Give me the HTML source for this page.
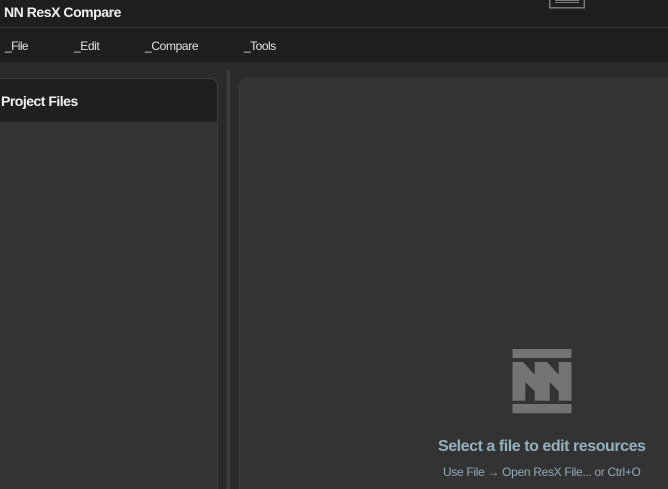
<!DOCTYPE html>
<html>
<head>
<meta charset="utf-8">
<style>
html,body{margin:0;padding:0;background:#2b2b2b;width:668px;height:489px;overflow:hidden;}
body{font-family:"Liberation Sans",Arial,sans-serif;}
#r{position:relative;width:668px;height:489px;overflow:hidden;background:#2b2b2b;}
.a{position:absolute;white-space:nowrap;}
</style>
</head>
<body>
<div id="r">
<div class="a" style="left:0;top:0;width:668px;height:27px;background:#1e1e1e;"></div>
<div class="a" style="left:0;top:27px;width:668px;height:1px;background:#3c3c3c;"></div>
<div class="a" style="left:0;top:28px;width:668px;height:34px;background:#1e1e1e;"></div>

<div class="a" style="left:4px;top:4px;font-size:14px;line-height:17px;font-weight:bold;color:#f0f0f0;letter-spacing:-.45px;">NN ResX Compare</div>

<svg class="a" style="left:545px;top:0;" width="45" height="12" viewBox="0 0 45 12">
  <rect x="4.7" y="-6" width="34.6" height="13.8" fill="none" stroke="#7d7d7d" stroke-width="1.4"/>
  <rect x="10" y="0" width="24" height="1" fill="#7d7d7d"/>
  <rect x="10" y="2" width="24" height="1" fill="#7d7d7d"/>
</svg>

<div class="a" style="left:5px;top:39px;font-size:12px;line-height:15px;color:#e4e4e4;letter-spacing:-.6px;">_File</div>
<div class="a" style="left:74px;top:39px;font-size:12px;line-height:15px;color:#e4e4e4;letter-spacing:-.4px;">_Edit</div>
<div class="a" style="left:145px;top:39px;font-size:12px;line-height:15px;color:#e4e4e4;letter-spacing:-.35px;">_Compare</div>
<div class="a" style="left:244px;top:39px;font-size:12px;line-height:15px;color:#e4e4e4;letter-spacing:-.5px;">_Tools</div>

<div class="a" style="left:-10px;top:78px;width:226px;height:420px;background:#333333;border:1px solid #3e3e3e;border-radius:8px;overflow:hidden;">
  <div style="height:43px;background:#1f1f1f;"></div>
</div>
<div class="a" style="left:1px;top:93px;font-size:14px;line-height:17px;font-weight:bold;color:#f0f0f0;letter-spacing:-.5px;">Project Files</div>

<div class="a" style="left:227px;top:70px;width:3px;height:419px;background:#3c3c3c;"></div>

<div class="a" style="left:239px;top:78px;width:440px;height:420px;background:#333333;border:1px solid #3c3c3c;border-radius:8px;box-sizing:border-box;"></div>

<svg class="a" style="left:0;top:0;" width="668" height="489" viewBox="0 0 668 489">
  <rect x="512.5" y="349" width="59" height="9" fill="#737373"/>
  <rect x="512.5" y="404" width="59" height="9.3" fill="#737373"/>
  <path fill="#737373" d="M512.5 362H523L534.7 374.7V362H547L558.7 374.7V362H571.5V400.7H558.7V391.3L549.7 382V400.7H534.7V391.3L525.3 382V400.7H512.5Z"/>
</svg>

<div class="a" style="left:438px;top:437px;font-size:16px;line-height:20px;font-weight:bold;color:#93b1bd;letter-spacing:-.45px;">Select a file to edit resources</div>
<div class="a" style="left:443px;top:465px;font-size:12px;line-height:15px;color:#8fabb7;letter-spacing:-.32px;">Use File → Open ResX File... or Ctrl+O</div>
</div>
</body>
</html>
